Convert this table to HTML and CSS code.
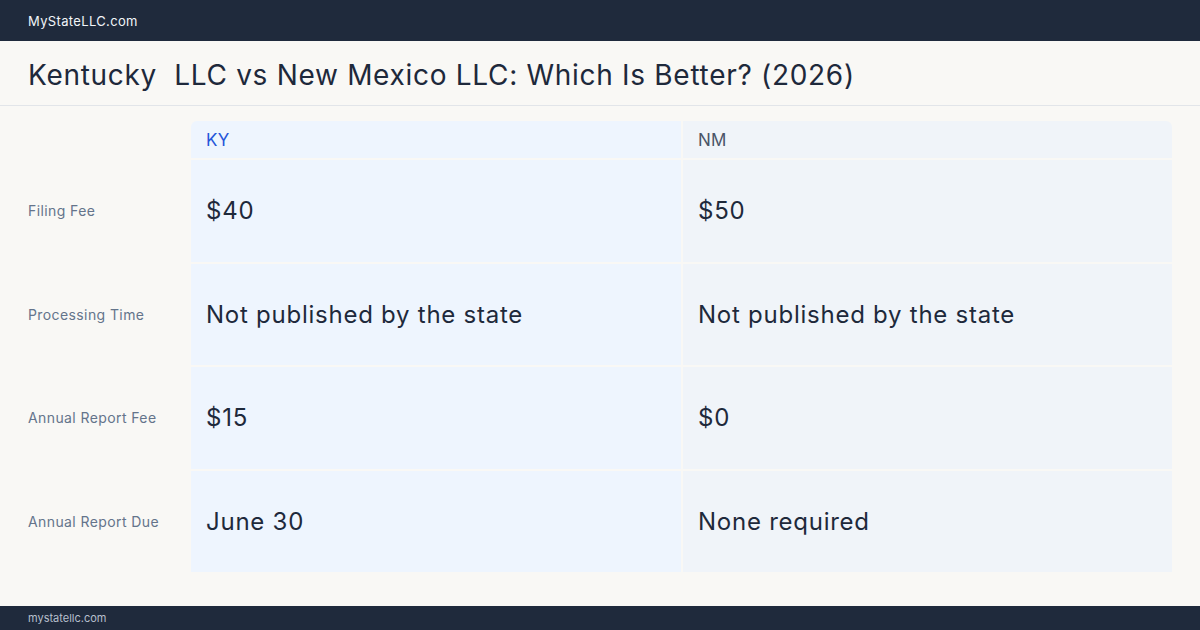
FILE: index.html
```html
<!DOCTYPE html>
<html>
<head>
<meta charset="utf-8">
<link rel="stylesheet" href="styles.css">
</head>
<body>
<div class="page">
  <header class="topbar">MyStateLLC.com</header>
  <div class="titlebar"><h1 class="title">Kentucky  LLC vs New Mexico LLC: Which Is Better? (2026)</h1></div>
  <main class="content">
    <div class="grid">
      <div class="corner"></div>
      <div class="head ky first">KY</div>
      <div class="head nm last">NM</div>

      <div class="label">Filing Fee</div>
      <div class="cell ky">$40</div>
      <div class="cell nm">$50</div>

      <div class="label">Processing Time</div>
      <div class="cell ky">Not published by the state</div>
      <div class="cell nm">Not published by the state</div>

      <div class="label">Annual Report Fee</div>
      <div class="cell ky">$15</div>
      <div class="cell nm">$0</div>

      <div class="label">Annual Report Due</div>
      <div class="cell ky">June 30</div>
      <div class="cell nm">None required</div>
    </div>
  </main>
  <footer class="footbar">mystatellc.com</footer>
</div>
</body>
</html>
```

FILE: styles.css
```css
* { box-sizing: border-box; margin: 0; padding: 0; }
html, body { width: 1200px; height: 630px; overflow: hidden; }
body {
  font-family: Inter, "Noto Sans", sans-serif;
  background: #f9f8f5;
  color: #1e293b;
}
.page { display: flex; flex-direction: column; height: 630px; }
.topbar {
  height: 41px;
  background: #1f2a3c;
  color: #f1f5f9;
  font-size: 13px;
  letter-spacing: 0.35px;
  padding-left: 28px;
  display: flex;
  align-items: center;
}
.titlebar {
  height: 65px;
  border-bottom: 1px solid #e2e5e9;
  padding: 3px 0 0 28px;
  display: flex;
  align-items: center;
}
.title {
  font-weight: 400;
  font-size: 28px;
  letter-spacing: 0.7px;
  white-space: pre;
  color: #1e293b;
}
.content { flex: 1; padding: 15px 28px 0 28px; }
.grid {
  display: grid;
  height: 451px;
  grid-template-columns: 161px 490px 489px;
  grid-template-rows: 37px repeat(4, 1fr);
  gap: 2px;
}
.head {
  display: flex;
  align-items: center;
  padding-left: 15px;
  font-size: 17px;
  letter-spacing: 0.3px;
}
.head.ky { color: #2555d9; background: #eef5fe; border-top-left-radius: 6px; }
.head.nm { color: #4a5568; background: #f0f4f9; border-top-right-radius: 6px; }
.label {
  display: flex;
  align-items: center;
  font-size: 14px;
  color: #64748b;
  letter-spacing: 0.4px;
}
.cell {
  display: flex;
  align-items: center;
  padding-left: 15px;
  font-size: 24px;
  letter-spacing: 0.75px;
  color: #1e293b;
}
.cell.ky { background: #eef5fe; }
.cell.nm { background: #f0f4f9; }
.footbar {
  height: 24px;
  background: #1f2a3c;
  color: #b6bfcc;
  font-size: 11px;
  letter-spacing: 0;
  padding-left: 28px;
  display: flex;
  align-items: center;
}
```
